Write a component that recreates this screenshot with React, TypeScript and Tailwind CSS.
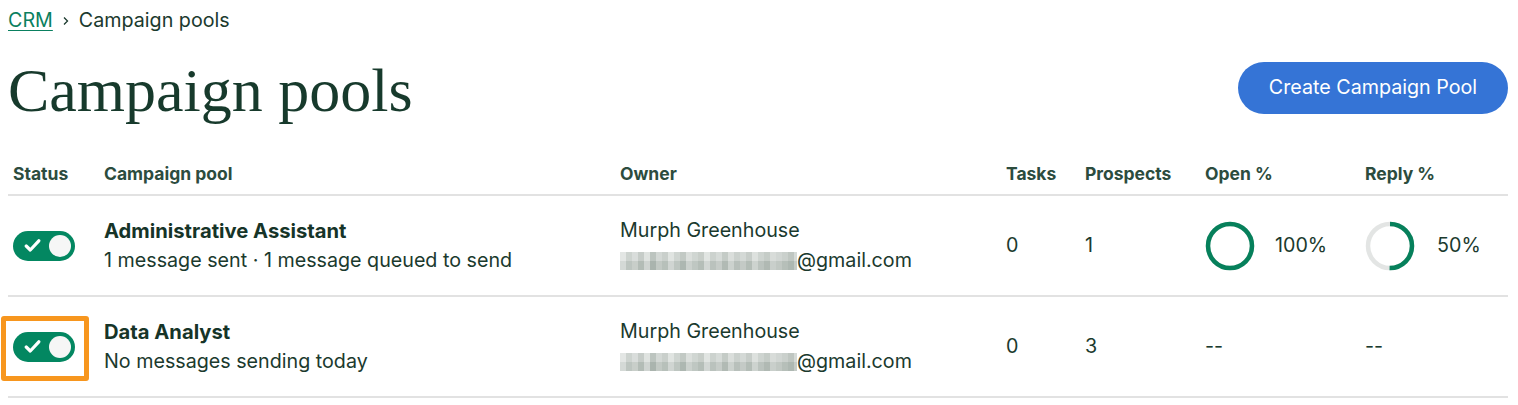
import React from "react";

const sans = { fontFamily: "Inter, 'Noto Sans', sans-serif" };

function Toggle({ highlight }: { highlight?: boolean }) {
  return (
    <div className="relative w-[62px] h-[30px]">
      {highlight && (
        <div className="absolute -left-[12px] -top-[16px] w-[88px] h-[65px] border-[5px] border-[#f7961e] rounded-[3px]" />
      )}
      <div className="w-[62px] h-[30px] rounded-full bg-[#038761] flex items-center justify-between pl-[11px] pr-[4px]">
        <svg width="17" height="15" viewBox="0 0 17 15">
          <path d="M2.2 8 L6.3 12 L14.8 2.8" fill="none" stroke="#fff" strokeWidth="3.2" strokeLinecap="round" strokeLinejoin="round" />
        </svg>
        <div className="w-[22px] h-[22px] rounded-full bg-[#f6f6f6]" />
      </div>
    </div>
  );
}

function Donut({ pct }: { pct: number }) {
  const r = 22;
  const c = 2 * Math.PI * r;
  return (
    <svg width="50" height="50" viewBox="0 0 50 50">
      <circle cx="25" cy="25" r={r} fill="none" stroke="#e3e5e4" strokeWidth="4.5" />
      <circle
        cx="25"
        cy="25"
        r={r}
        fill="none"
        stroke="#06805b"
        strokeWidth="4.5"
        strokeDasharray={`${(c * pct) / 100} ${c}`}
        transform="rotate(-90 25 25)"
      />
    </svg>
  );
}

const blurA = ["#e3e6e4", "#cdd3cf", "#d9dddb", "#c6ccc8", "#dfe3e0", "#bcc4bf", "#d3d8d5", "#c9cfcb", "#e0e4e1", "#cfd5d1", "#c2c9c4", "#dbdfdc", "#d0d6d2", "#c8cec9", "#e1e5e2", "#ccd2ce", "#d6dbd8", "#c4cbc6", "#dadedb", "#cbd1cd", "#d4d9d6", "#c7cdc9", "#dde1de", "#ced4d0", "#c5ccc7", "#d8dcd9", "#d1d6d3", "#cad0cc", "#bfc6c1", "#d5dad7"];
const blurB = ["#d4d9d6", "#bdc5c0", "#c8cec9", "#b3bcb6", "#cfd4d1", "#aab4ae", "#c2c9c4", "#b7c0ba", "#d0d5d2", "#bec6c1", "#adb7b1", "#cbd1cd", "#bfc7c2", "#b5beb8", "#d2d7d4", "#bac2bd", "#c6ccc8", "#b1bab4", "#ccd2ce", "#b8c0bb", "#c4cac6", "#b4bdb7", "#cdd3cf", "#bbc3be", "#b0b9b3", "#c9cfcb", "#c1c8c3", "#b6bfb9", "#aeb8b2", "#c5cbc7"];

function Email() {
  return (
    <div className="flex items-center">
      <div className="flex flex-col w-[177px] h-[18px] overflow-hidden">
        <div className="flex h-[9px]">
          {blurA.map((c, i) => (
            <div key={i} className="w-[6px] h-[9px] shrink-0" style={{ background: c }} />
          ))}
        </div>
        <div className="flex h-[9px]">
          {blurB.map((c, i) => (
            <div key={i} className="w-[6px] h-[9px] shrink-0" style={{ background: c }} />
          ))}
        </div>
      </div>
      <span>@gmail.com</span>
    </div>
  );
}

const grid = "grid grid-cols-[91px_516px_386px_79px_120px_160px_1fr]";

function Row({ title, sub, tasks, prospects, open, reply, highlight }: { title: string; sub: string; tasks: string; prospects: string; open?: number; reply?: number; highlight?: boolean }) {
  return (
    <div className={`${grid} h-[101px] items-center border-b-2 border-[#e2e2e2] text-[19.7px] text-[#1b3a2e]`}>
      <div className="pl-[5px]">
        <Toggle highlight={highlight} />
      </div>
      <div className="pl-[5px] flex flex-col gap-[5px]">
        <div className="font-bold text-[20.2px] leading-[25px] text-[#163428]">{title}</div>
        <div className="leading-[25px]">{sub}</div>
      </div>
      <div className="pl-[5px] flex flex-col gap-[5px]">
        <div className="leading-[25px]">Murph Greenhouse</div>
        <div className="leading-[25px]">
          <Email />
        </div>
      </div>
      <div className="pl-[5px]">{tasks}</div>
      <div className="pl-[5px]">{prospects}</div>
      <div className="pl-[5px]">
        {open !== undefined ? (
          <div className="flex items-center gap-[20px]">
            <Donut pct={open} />
            <span>{open}%</span>
          </div>
        ) : (
          <span>--</span>
        )}
      </div>
      <div className="pl-[5px]">
        {reply !== undefined ? (
          <div className="flex items-center gap-[22px]">
            <Donut pct={reply} />
            <span>{reply}%</span>
          </div>
        ) : (
          <span>--</span>
        )}
      </div>
    </div>
  );
}

export default function App() {
  return (
    <div className="bg-white w-[1518px] h-[405px] pl-[8px] pr-[10px]" style={sans}>
      <div className="h-[41px] flex items-center gap-[9px] text-[19.7px] text-[#1b3a2e]">
        <span className="text-[#0a8060] underline underline-offset-[3px] decoration-1">CRM</span>
        <svg width="8" height="10" viewBox="0 0 8 10">
          <path d="M2 1.5 L5.5 5 L2 8.5" fill="none" stroke="#1b3a2e" strokeWidth="1.3" />
        </svg>
        <span>Campaign pools</span>
      </div>
      <div className="flex items-center justify-between h-[94px]">
        <h1 className="text-[62px] leading-none text-[#173a2c] pt-[4px]" style={{ fontFamily: "'Liberation Serif', 'DejaVu Serif', serif" }}>
          Campaign pools
        </h1>
        <button className="h-[52px] w-[270px] rounded-full bg-[#3574d6] text-white text-[19.7px]" style={sans}>
          Create Campaign Pool
        </button>
      </div>
      <div className={`${grid} h-[61px] items-center pt-[19px] border-b-2 border-[#e2e2e2] text-[17.5px] font-bold text-[#2c4c3e]`}>
        <div className="pl-[5px]">Status</div>
        <div className="pl-[5px]">Campaign pool</div>
        <div className="pl-[5px]">Owner</div>
        <div className="pl-[5px]">Tasks</div>
        <div className="pl-[5px]">Prospects</div>
        <div className="pl-[5px]">Open %</div>
        <div className="pl-[5px]">Reply %</div>
      </div>
      <Row title="Administrative Assistant" sub="1 message sent · 1 message queued to send" tasks="0" prospects="1" open={100} reply={50} />
      <Row title="Data Analyst" sub="No messages sending today" tasks="0" prospects="3" highlight />
    </div>
  );
}
